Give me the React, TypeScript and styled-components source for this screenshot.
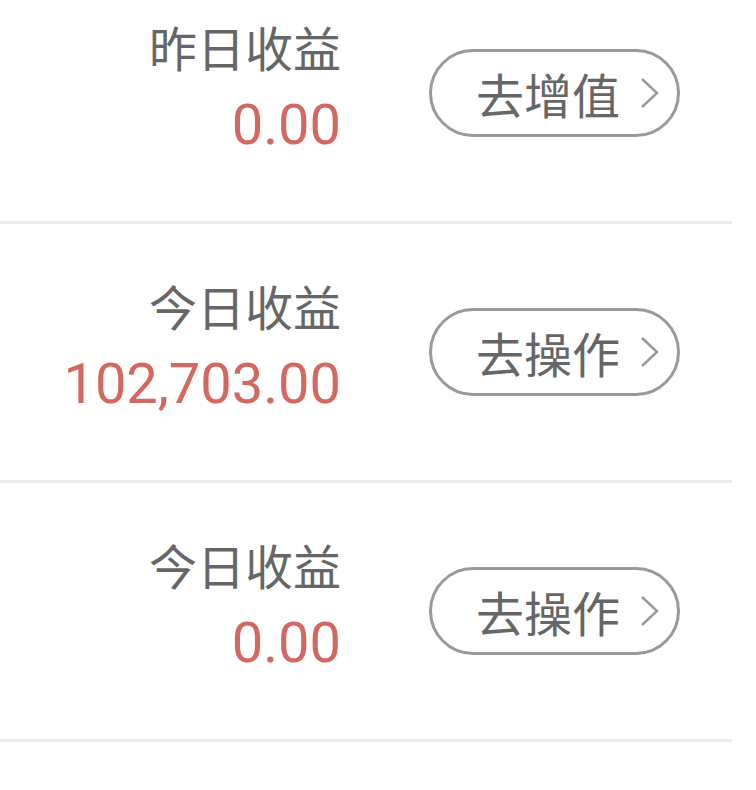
import React from 'react';
import styled, { createGlobalStyle } from 'styled-components';

const GlobalStyle = createGlobalStyle`
  html, body {
    margin: 0;
    padding: 0;
    background: #ffffff;
    overflow: hidden;
  }
  body {
    font-family: Roboto, "Noto Sans CJK SC", "Noto Sans", sans-serif;
  }
`;

const Page = styled.div`
  width: 732px;
  height: 790px;
  overflow: hidden;
  background: #ffffff;
`;

const List = styled.div`
  display: flex;
  flex-direction: column;
  margin-top: -35px;
`;

const Row = styled.div`
  height: 256px;
  display: flex;
  align-items: center;
  border-bottom: 3px solid #ebebeb;
`;

const TextBlock = styled.div`
  width: 341px;
  padding-bottom: 10px;
  display: flex;
  flex-direction: column;
  align-items: flex-end;
  gap: 22px;
`;

const Label = styled.div`
  font-family: "Noto Sans CJK SC", sans-serif;
  font-size: 48px;
  line-height: 52px;
  color: #666666;
`;

const Amount = styled.div`
  font-family: Roboto, sans-serif;
  font-size: 56px;
  line-height: 62px;
  color: #d4675f;
`;

const ActionButton = styled.button`
  margin-left: 88px;
  width: 251px;
  height: 88px;
  box-sizing: border-box;
  border: 3px solid #999999;
  border-radius: 44px;
  background: #ffffff;
  padding: 0 18px 0 44px;
  display: flex;
  align-items: center;
  justify-content: space-between;
  font-family: "Noto Sans CJK SC", sans-serif;
  font-size: 48px;
  color: #666666;
  cursor: pointer;
`;

const Chevron = () => (
  <svg width="19" height="32" viewBox="0 0 19 32">
    <polyline
      points="2,2 17,16 2,30"
      fill="none"
      stroke="#9a9a9a"
      strokeWidth="2.5"
    />
  </svg>
);

interface RowData {
  label: string;
  amount: string;
  action: string;
}

const rows: RowData[] = [
  { label: '昨日收益', amount: '0.00', action: '去增值' },
  { label: '今日收益', amount: '102,703.00', action: '去操作' },
  { label: '今日收益', amount: '0.00', action: '去操作' },
];

const App = () => {
  return (
    <Page>
      <GlobalStyle />
      <List>
        {rows.map((r, i) => (
          <Row key={i}>
            <TextBlock>
              <Label>{r.label}</Label>
              <Amount>{r.amount}</Amount>
            </TextBlock>
            <ActionButton>
              <span>{r.action}</span>
              <Chevron />
            </ActionButton>
          </Row>
        ))}
      </List>
    </Page>
  );
};

export default App;
